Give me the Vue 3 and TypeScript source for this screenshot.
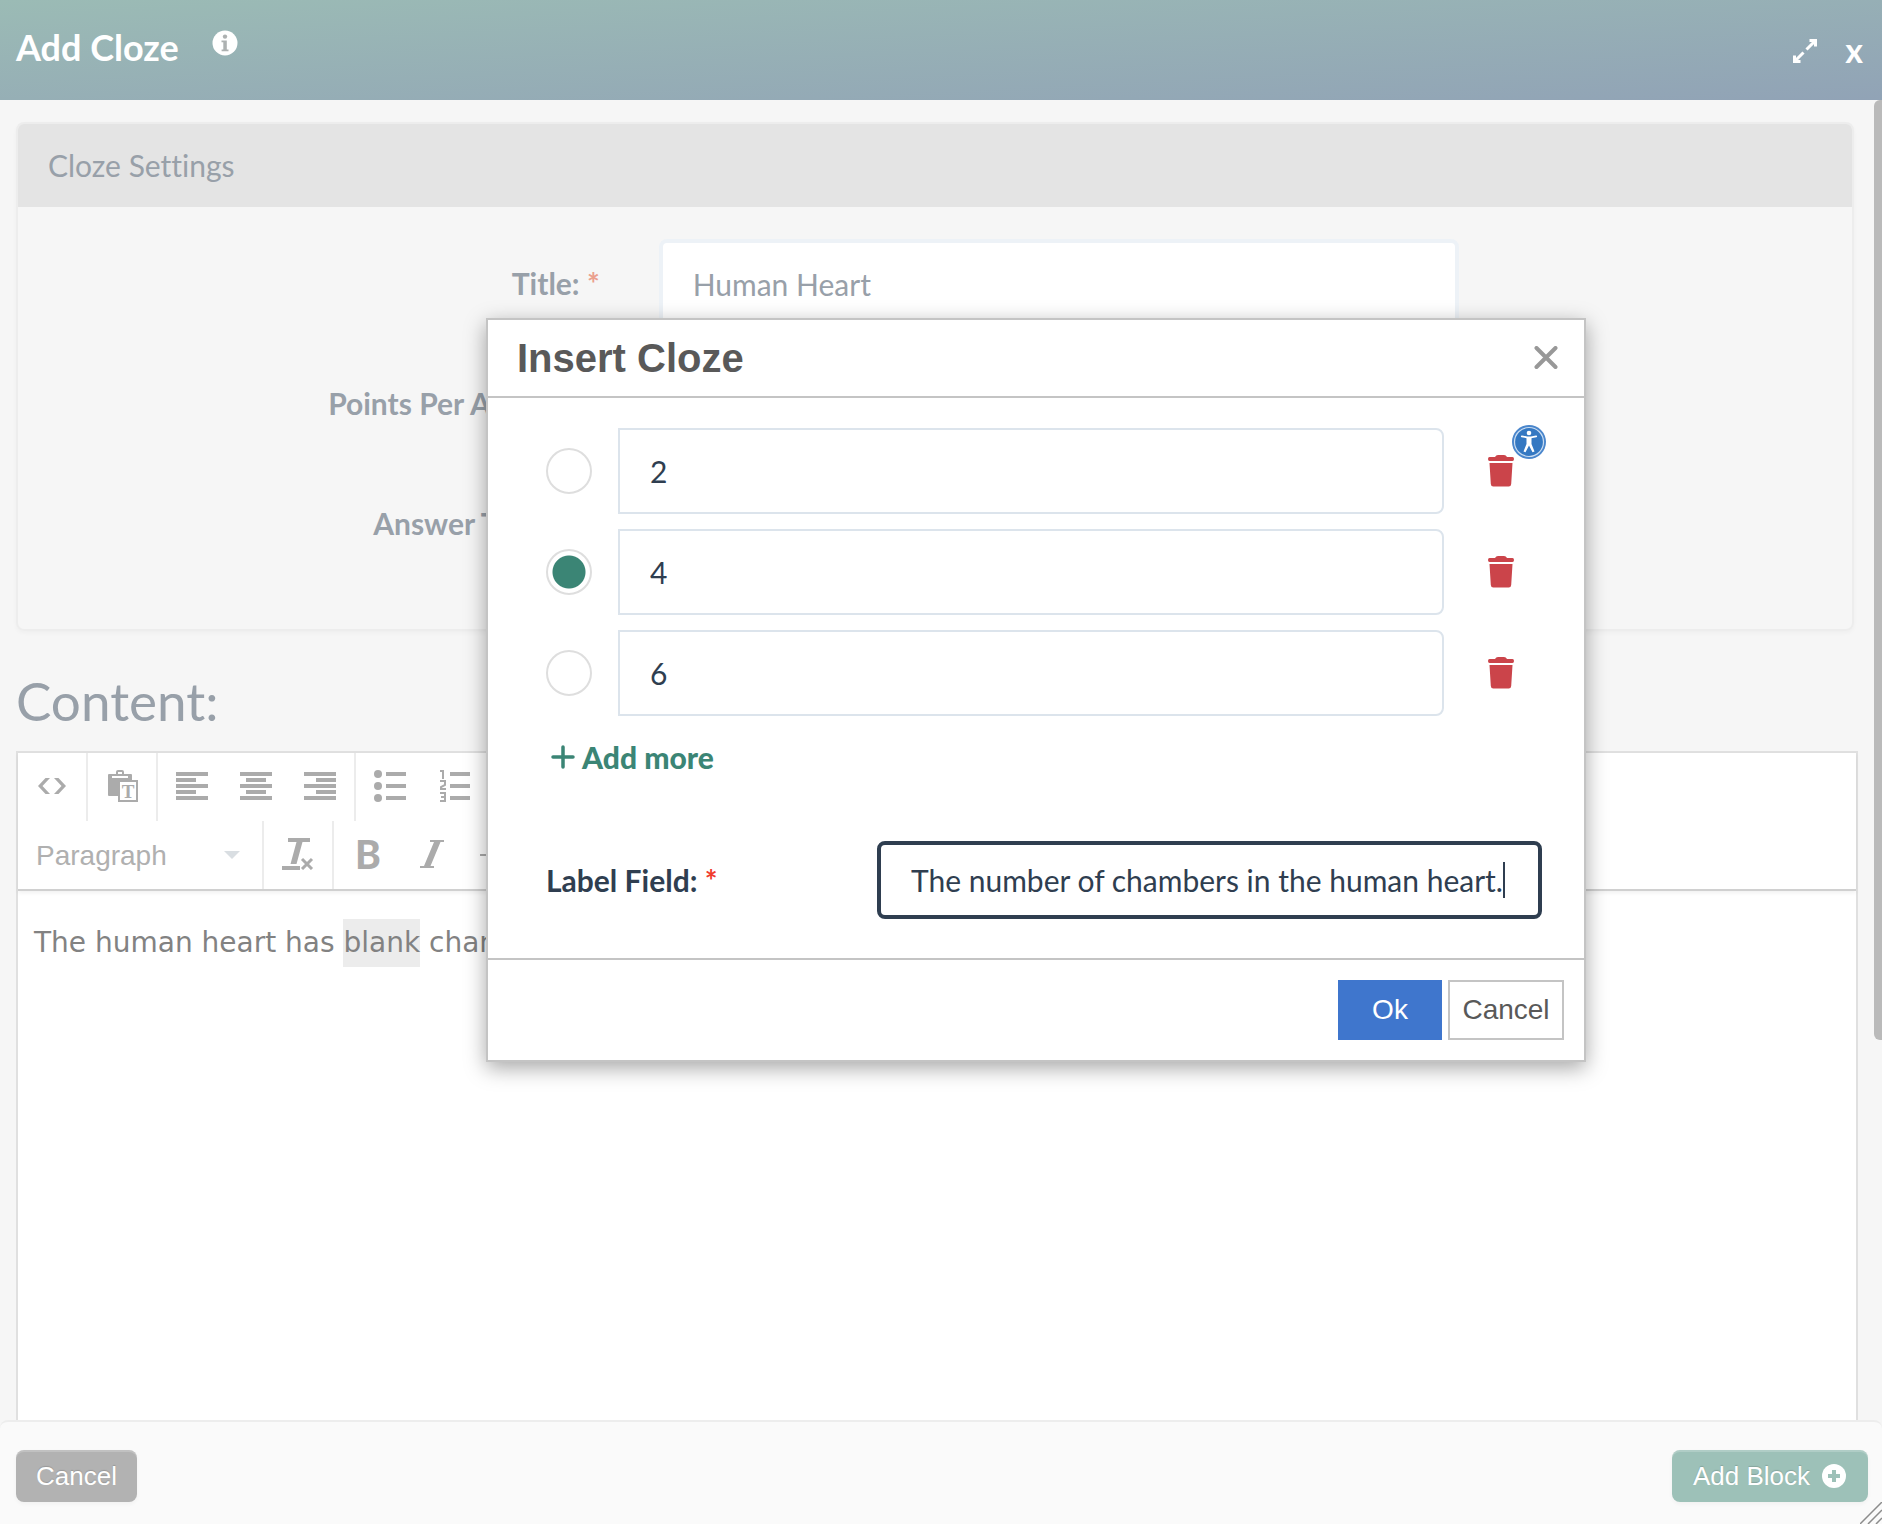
<script setup lang="ts">
import { ref } from 'vue'

interface Answer {
  id: number
  text: string
}

const title = ref('Human Heart')
const points = ref('')
const answerTiming = ref('')
const format = ref('Paragraph')
const answers = ref<Answer[]>([
  { id: 1, text: '2' },
  { id: 2, text: '4' },
  { id: 3, text: '6' },
])
const correct = ref(2)
const labelField = ref('The number of chambers in the human heart.')

const alignments = [
  { name: 'Align left', short: 0 },
  { name: 'Center', short: 6 },
  { name: 'Align right', short: 12 },
]

function remove(id: number) {
  answers.value = answers.value.filter((a) => a.id !== id)
}

function addAnswer() {
  answers.value.push({ id: Date.now(), text: '' })
}
</script>

<template>
  <div class="page">
    <header class="topbar">
      <h1>Add Cloze</h1>
      <button class="bare info" type="button" aria-label="Information">
        <svg width="26" height="26" viewBox="0 0 26 26">
          <circle cx="13" cy="13" r="12.5" fill="#fff" />
          <circle cx="13" cy="6.6" r="2.2" fill="#adb1b1" />
          <path d="M9.5 10.4h5.3v9h1.7v1.9H9.6v-1.9h1.7v-7.1H9.5z" fill="#adb1b1" />
        </svg>
      </button>
      <div class="window-tools">
        <button class="bare" type="button" aria-label="Expand">
          <svg width="24" height="24" viewBox="0 0 24 24" fill="none" stroke="#fff" stroke-width="3">
            <path d="M13.500 10.500L22 2M16.500 1.500h6v6M10.500 13.500L2 22M1.500 16.500v6h6" />
          </svg>
        </button>
        <button class="bare close-page" type="button" aria-label="Close">x</button>
      </div>
    </header>

    <main class="content">
      <section class="card">
        <h2>Cloze Settings</h2>
        <div class="card-body">
          <div class="form-row">
            <label for="title">Title: <sup>*</sup></label>
            <input id="title" v-model="title" type="text" />
          </div>
          <div class="form-row">
            <label for="points">Points Per Answer: <sup>*</sup></label>
            <input id="points" v-model="points" type="text" />
          </div>
          <div class="form-row">
            <label for="answer-timing">Answer Timing: <sup>*</sup></label>
            <input id="answer-timing" v-model="answerTiming" type="text" />
          </div>
        </div>
      </section>

      <h2 class="content-title">Content:</h2>

      <section class="editor">
        <div class="toolbar">
          <div class="tool-row">
            <div class="tool-group">
              <button type="button" aria-label="Source code">
                <svg width="32" height="32" viewBox="0 0 32 32" fill="#ababab">
                  <path d="M9.500 8h4.500L6.500 16l7.500 8H9.500L2 16zM22.500 8H18l7.500 8-7.500 8h4.500L30 16z" />
                </svg>
              </button>
            </div>
            <div class="tool-group">
              <button type="button" aria-label="Paste as text">
                <svg width="32" height="32" viewBox="0 0 32 32">
                  <path d="M2 5q0-1 1-1h7V2q0-2 2-2h4q2 0 2 2v2h7q1 0 1 1v5H12v16H3q-1 0-1-1z" fill="#ababab" />
                  <path d="M6 6h16v2H6zM12 2h4v2h-4z" fill="#fff" />
                  <path d="M13 11h18v20H13z" fill="#fff" stroke="#ababab" stroke-width="2" />
                  <text x="22" y="28" text-anchor="middle" font-family="Liberation Serif, serif" font-size="19" font-weight="bold" fill="#ababab">T</text>
                </svg>
              </button>
            </div>
            <div class="tool-group">
              <button v-for="a in alignments" :key="a.name" type="button" :aria-label="a.name">
                <svg width="32" height="32" viewBox="0 0 32 32" fill="#ababab">
                  <path d="M0 2h32v4H0zM0 14h32v4H0zM0 26h32v4H0z" />
                  <rect :x="a.short" y="8" width="20" height="4" />
                  <rect :x="a.short" y="20" width="20" height="4" />
                </svg>
              </button>
            </div>
            <div class="tool-group">
              <button type="button" aria-label="Bullet list">
                <svg width="32" height="32" viewBox="0 0 32 32" fill="#ababab">
                  <circle cx="4" cy="4" r="4" /><circle cx="4" cy="16" r="4" /><circle cx="4" cy="28" r="4" />
                  <path d="M12 2h20v4H12zM12 14h20v4H12zM12 26h20v4H12z" />
                </svg>
              </button>
              <button type="button" aria-label="Numbered list">
                <svg width="32" height="32" viewBox="0 0 32 32">
                  <path d="M12 2h20v4H12zM12 14h20v4H12zM12 26h20v4H12z" fill="#ababab" />
                  <path d="M2 1h3v8M2 11h5v4L3 17v2h5M2 23h5v8H2M3 27h4" fill="none" stroke="#ababab" stroke-width="2" />
                </svg>
              </button>
            </div>
          </div>
          <div class="tool-row">
            <div class="tool-group format">
              <select v-model="format" aria-label="Text format">
                <option>Paragraph</option>
              </select>
              <svg class="caret-down" width="16" height="8" viewBox="0 0 16 8"><path d="M0 0h16L8 8z" fill="#d9dee2" /></svg>
            </div>
            <div class="tool-group">
              <button type="button" aria-label="Clear formatting">
                <svg width="32" height="32" viewBox="0 0 32 32" fill="#ababab">
                  <path d="M6 0h22v4h-7.500l-6 22h-6l6-22H6zM0 28h18v4H0z" />
                  <path d="M20 21l10 10M30 21L20 31" stroke="#ababab" stroke-width="3" />
                </svg>
              </button>
            </div>
            <div class="tool-group last">
              <button class="bold" type="button" aria-label="Bold">B</button>
              <button type="button" aria-label="Italic">
                <svg width="32" height="32" viewBox="0 0 32 32" fill="#ababab">
                  <path d="M14 2h14v2h-3.500l-10 24H18v2H4v-2h4L18 4h-4z" />
                </svg>
              </button>
              <button type="button" aria-label="Strikethrough">
                <svg width="32" height="32" viewBox="0 0 32 32"><path d="M0 16h32v2H0z" fill="#ababab" /></svg>
              </button>
            </div>
          </div>
        </div>
        <p class="editor-text">The human heart has <span class="blank">blank</span> chambers.</p>
      </section>
      <div class="scroll-thumb"></div>
    </main>

    <footer class="bottombar">
      <button class="btn btn-grey" type="button">Cancel</button>
      <button class="btn btn-green" type="button">
        Add Block
        <svg width="24" height="24" viewBox="0 0 24 24">
          <circle cx="12" cy="12" r="12" fill="#fff" />
          <path d="M12 6v12M6 12h12" stroke="#9dc1b8" stroke-width="4" />
        </svg>
      </button>
      <svg class="grip" width="22" height="22" viewBox="0 0 22 22" stroke="#8c8c8c" stroke-width="1.500">
        <path d="M0 22L22 0M8 22L22 8M16 22l6-6" />
      </svg>
    </footer>

    <div class="dialog" role="dialog" aria-labelledby="dialog-title">
      <div class="dialog-head">
        <h2 id="dialog-title">Insert Cloze</h2>
        <button class="bare" type="button" aria-label="Close dialog">
          <svg width="24" height="24" viewBox="0 0 24 24" stroke="#989898" stroke-width="4" stroke-linecap="round">
            <path d="M2.500 2l19 19M21.500 2l-19 19" />
          </svg>
        </button>
      </div>
      <div class="dialog-body">
        <div class="answers">
          <div v-for="(a, i) in answers" :key="a.id" class="answer">
            <input v-model="correct" class="radio" type="radio" name="correct" :value="a.id" :aria-label="`Answer ${i + 1} is correct`" />
            <input v-model="a.text" class="answer-text" type="text" :aria-label="`Answer ${i + 1}`" />
            <button class="bare trash" type="button" aria-label="Delete answer" @click="remove(a.id)">
              <svg width="26" height="32" viewBox="0 0 26 32" fill="#cb444a">
                <path d="M1.500 2H7q1-2 3-2h6q2 0 3 2h5.500Q26 2 26 4t-1.500 2h-23Q0 6 0 4t1.500-2zM1.500 8h23l-1.300 21q-.2 2.500-2.500 2.500H5.300q-2.300 0-2.500-2.500z" />
              </svg>
            </button>
            <svg v-if="i === 0" class="a11y" width="34" height="34" viewBox="0 0 34 34">
              <circle cx="17" cy="17" r="17" fill="#4a86cc" />
              <circle cx="17" cy="17" r="14.500" fill="#3478c2" stroke="#c9dcf1" stroke-width="1.200" />
              <circle cx="17" cy="8" r="2.300" fill="#fff" />
              <path d="M9.800 11.300l5.200 1h4l5.200-1" fill="none" stroke="#fff" stroke-width="1.800" stroke-linecap="round" />
              <path d="M14.500 12h5v7l3 7.500-2 .8L17 20.500l-3.500 6.800-2-.8 3-7.500z" fill="#fff" />
            </svg>
          </div>
        </div>
        <button class="bare add-more" type="button" @click="addAnswer">
          <svg width="24" height="24" viewBox="0 0 24 24" stroke="#3b8575" stroke-width="3.500" stroke-linecap="round">
            <path d="M12 2v20M2 12h20" />
          </svg>
          Add more
        </button>
        <div class="label-row">
          <label for="label-field">Label Field: <sup>*</sup></label>
          <div class="label-input">
            <input id="label-field" v-model="labelField" type="text" />
            <span class="text-caret"></span>
          </div>
        </div>
      </div>
      <div class="dialog-foot">
        <button class="ok" type="button">Ok</button>
        <button class="cancel" type="button">Cancel</button>
      </div>
    </div>
  </div>
</template>

<style>
body {
  margin: 0;
}
</style>

<style scoped>
.page {
  position: relative;
  display: flex;
  flex-direction: column;
  height: 100vh;
  overflow: hidden;
  background: #f6f6f6;
  font-family: Lato, sans-serif;
  font-size: 30px;
  line-height: 36px;
  font-variant-ligatures: none;
  color: #98a0a9;
}
* {
  box-sizing: border-box;
}
h1,
h2,
p {
  margin: 0;
}
svg {
  display: block;
}
input,
button,
select {
  margin: 0;
  font: inherit;
  font-variant-ligatures: none;
  color: inherit;
}
.bare {
  padding: 0;
  border: 0;
  background: none;
}
sup {
  font-size: inherit;
  line-height: 0;
  vertical-align: baseline;
  color: #eba08e;
}

/* top bar */
.topbar {
  display: flex;
  flex: none;
  align-items: flex-start;
  height: 100px;
  padding: 25px 19px 0 16px;
  background: linear-gradient(177deg, #9bbbb5, #91a3b6);
  color: #fff;
}
h1 {
  font-size: 36px;
  line-height: 44px;
}
.info {
  margin: 5px 0 0 33px;
}
.window-tools {
  display: flex;
  align-items: center;
  gap: 28px;
  margin-left: auto;
}
.close-page {
  padding-bottom: 2px;
  font-size: 34px;
  font-weight: 700;
  line-height: 50px;
}

/* settings card */
.content {
  position: relative;
  flex: 1;
  min-height: 0;
  padding: 22px 24px 0 16px;
  overflow: hidden;
}
.card {
  margin-right: 4px;
  border: 2px solid #ededed;
  border-radius: 8px;
  box-shadow: 0 2px 4px rgba(0, 0, 0, 0.03);
}
.card h2 {
  padding: 23px 30px 24px;
  border-radius: 6px 6px 0 0;
  background: #e4e4e4;
  font-size: 30px;
  font-weight: 400;
}
.card-body {
  display: flex;
  flex-direction: column;
  gap: 28px;
  padding: 32px 0 58px;
}
.form-row {
  display: grid;
  grid-template-columns: 582fr 801fr 334fr;
  column-gap: 59px;
}
.form-row label {
  padding-top: 26px;
  font-weight: 700;
  text-align: right;
}
.form-row input {
  width: 100%;
  height: 92px;
  padding: 0 30px 2px;
  border: 4px solid #edf2f7;
  border-radius: 8px;
  background: #fff;
}
.content-title {
  padding: 39px 0 19px;
  font-size: 53px;
  font-weight: 400;
  line-height: 62px;
}

/* editor */
.editor {
  height: 760px;
  border: 2px solid #e0e0e0;
  background: #fff;
}
.toolbar {
  border-bottom: 2px solid #d0d0d0;
  box-shadow: 0 2px 4px rgba(0, 0, 0, 0.06);
}
.tool-row {
  display: flex;
  height: 68px;
}
.tool-group {
  display: flex;
  padding: 0 2px;
  border-right: 2px solid #ececec;
}
.tool-group:last-child {
  border-right: 0;
}
.tool-group button {
  display: flex;
  align-items: center;
  justify-content: center;
  width: 64px;
  height: 68px;
  padding: 0 0 2px;
  border: 0;
  background: none;
  color: #ababab;
}
.tool-group .bold {
  font-size: 39px;
  font-weight: 900;
}
.format {
  position: relative;
  width: 246px;
}
.format select {
  width: 100%;
  padding: 2px 16px 0;
  border: 0;
  background: none;
  appearance: none;
  font: 28px/32px 'Liberation Sans', Arial, sans-serif;
  color: #b0b0b0;
}
.caret-down {
  position: absolute;
  top: 30px;
  right: 22px;
  pointer-events: none;
}
.editor-text {
  padding: 28px 16px;
  font-family: 'DejaVu Sans', Verdana, sans-serif;
  font-size: 28px;
  line-height: 48px;
  color: #828282;
}
.blank {
  display: inline-block;
  background: #ececec;
}
.scroll-thumb {
  position: absolute;
  top: 0;
  right: 0;
  width: 8px;
  height: 940px;
  border-radius: 6px 0 0 6px;
  background: #bababa;
}

/* bottom bar */
.bottombar {
  position: relative;
  display: flex;
  flex: none;
  justify-content: space-between;
  padding: 28px 14px 22px 16px;
  border-top: 2px solid #ededed;
  border-radius: 8px 8px 0 0;
  background: #fafafa;
}
.btn {
  display: flex;
  align-items: center;
  gap: 12px;
  height: 52px;
  padding: 0 20px;
  border: 0;
  border-radius: 8px;
  font-family: 'Liberation Sans', Arial, sans-serif;
  font-size: 26px;
  color: #fff;
  text-shadow: 0 -1px 1px rgba(0, 0, 0, 0.15);
  box-shadow: inset 0 2px 0 rgba(255, 255, 255, 0.2), 0 2px 4px rgba(0, 0, 0, 0.04);
}
.btn-grey {
  background: #b2b2b2;
}
.btn-green {
  padding: 0 22px 0 21px;
  background: #9dc1b8;
}
.grip {
  position: absolute;
  right: 0;
  bottom: 0;
}

/* dialog */
.dialog {
  position: absolute;
  top: 318px;
  left: 486px;
  width: 1100px;
  border: 2px solid #c4c4c4;
  background: #fff;
  box-shadow: 0 6px 20px rgba(0, 0, 0, 0.35);
  color: #2f3e50;
}
.dialog-head {
  display: flex;
  align-items: center;
  justify-content: space-between;
  height: 78px;
  padding: 0 26px 0 29px;
  border-bottom: 2px solid #c4c4c4;
}
.dialog-head h2 {
  font: 700 40px/46px 'Liberation Sans', Arial, sans-serif;
  color: #595959;
}
.dialog-body {
  padding: 30px 42px 39px 58px;
}
.answers {
  display: flex;
  flex-direction: column;
  gap: 15px;
}
.answer {
  position: relative;
  display: flex;
  align-items: center;
}
.radio {
  width: 46px;
  height: 46px;
  border: 2px solid #dedede;
  border-radius: 50%;
  background: #fff;
  appearance: none;
}
.radio:checked {
  background: radial-gradient(circle, #3b8575 16px, #fff 17px);
}
.answer-text {
  flex: 1;
  height: 86px;
  margin: 0 44px 0 26px;
  padding: 0 30px 1px;
  border: 2px solid #dce4ec;
  border-radius: 0 8px 8px 0;
  background: #fff;
}
.trash {
  margin-right: 28px;
}
.a11y {
  position: absolute;
  top: -3px;
  right: -4px;
}
.add-more {
  display: flex;
  align-items: center;
  gap: 7px;
  margin: 23px 0 0 5px;
  font-weight: 900;
  color: #3b8575;
}
.label-row {
  display: flex;
  align-items: center;
  justify-content: space-between;
  margin-top: 66px;
}
.label-row label {
  font-weight: 700;
}
.label-row sup {
  color: #f03a2c;
}
.label-input {
  position: relative;
  width: 665px;
}
.label-input input {
  width: 100%;
  height: 78px;
  padding: 0 30px;
  border: 4px solid #2f3e50;
  border-radius: 8px;
  background: #fff;
}
.text-caret {
  position: absolute;
  top: 21px;
  left: 626px;
  width: 2px;
  height: 36px;
  background: #2f3e50;
}
.dialog-foot {
  display: flex;
  justify-content: flex-end;
  gap: 6px;
  padding: 20px;
  border-top: 2px solid #c4c4c4;
}
.dialog-foot button {
  height: 60px;
  font-family: 'Liberation Sans', Arial, sans-serif;
  font-size: 28px;
}
.ok {
  width: 104px;
  border: 0;
  background: #3f76cd;
  color: #fff;
}
.cancel {
  width: 116px;
  padding: 0;
  border: 2px solid #c4c4c4;
  background: #fff;
}
.dialog-foot .cancel {
  color: #595959;
}
</style>
